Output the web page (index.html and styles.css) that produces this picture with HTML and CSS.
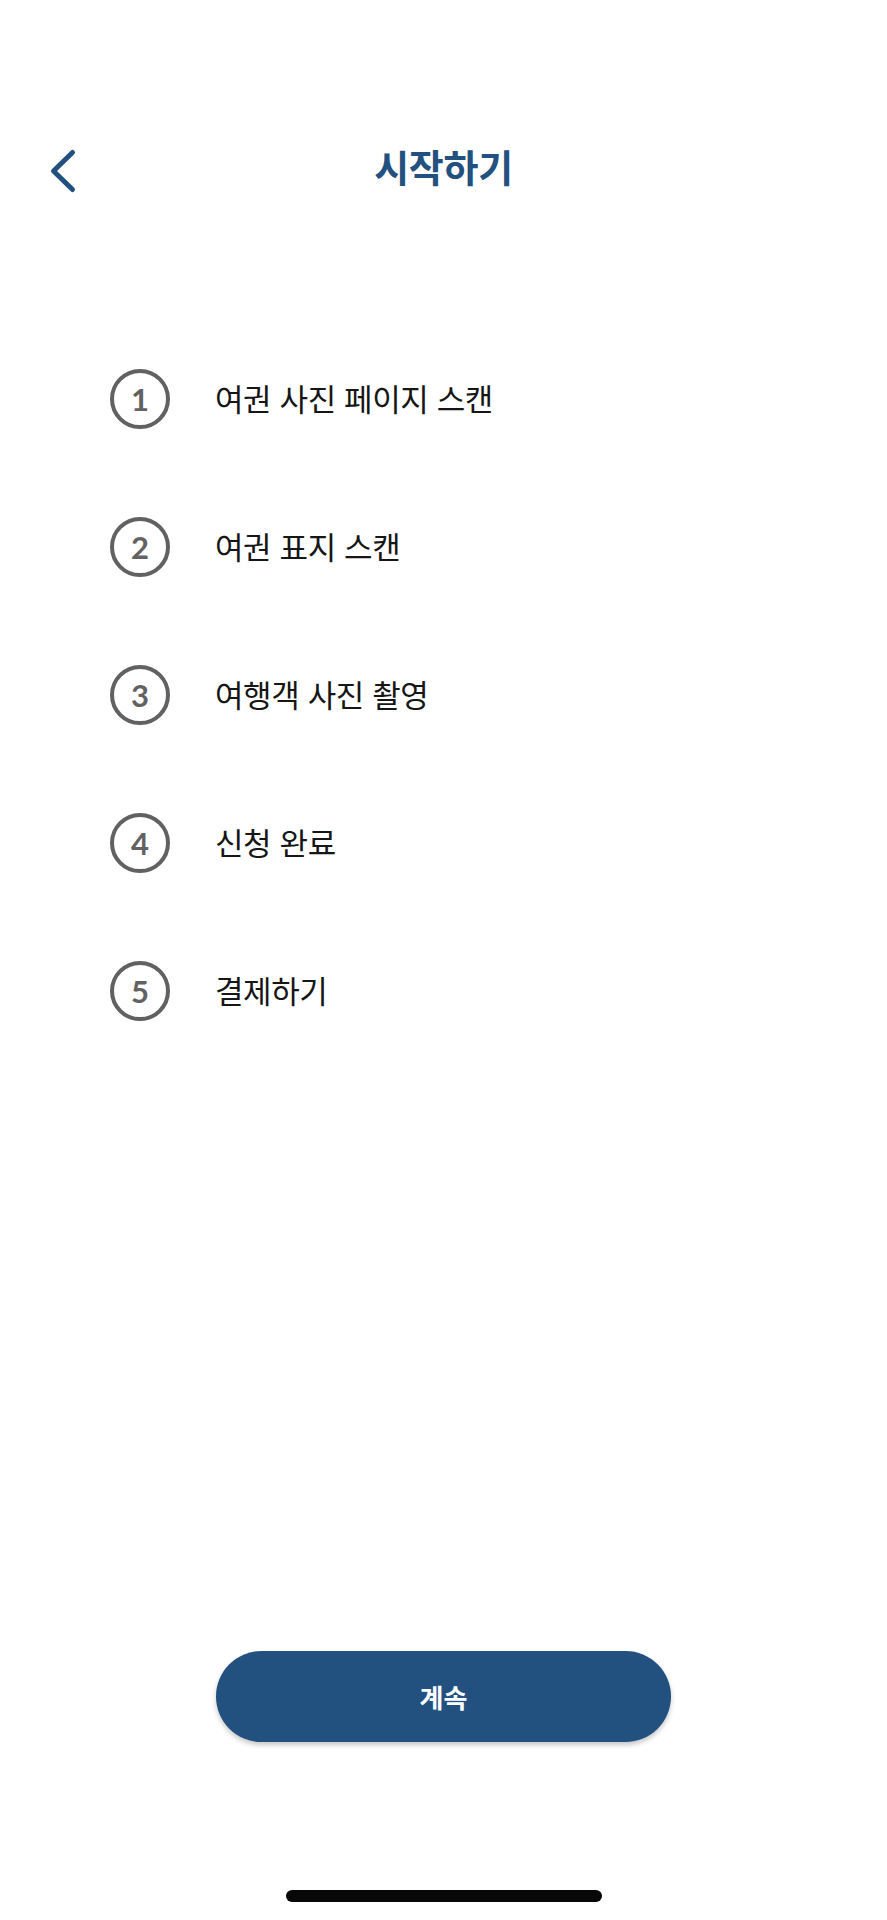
FILE: index.html
```html
<!DOCTYPE html>
<html lang="ko">
<head>
<meta charset="utf-8">
<title>시작하기</title>
<link rel="stylesheet" href="styles.css">
</head>
<body>
<div class="screen">
  <header class="header">
    <button class="back" aria-label="뒤로">
      <svg width="30" height="48" viewBox="0 0 30 48"><path d="M24.5 5.5 L5.5 24 L24.5 42.5" fill="none" stroke="#22507f" stroke-width="5" stroke-linecap="round" stroke-linejoin="round"/></svg>
    </button>
    <h1 class="title">시작하기</h1>
  </header>
  <ol class="steps">
    <li class="step"><span class="num">1</span><span class="label">여권 사진 페이지 스캔</span></li>
    <li class="step"><span class="num">2</span><span class="label">여권 표지 스캔</span></li>
    <li class="step"><span class="num">3</span><span class="label">여행객 사진 촬영</span></li>
    <li class="step"><span class="num">4</span><span class="label">신청 완료</span></li>
    <li class="step"><span class="num">5</span><span class="label">결제하기</span></li>
  </ol>
  <div class="spacer"></div>
  <button class="continue">계속</button>
  <div class="home-indicator"></div>
</div>
</body>
</html>
```
FILE: styles.css
```css
* { box-sizing: border-box; }
html, body { margin: 0; padding: 0; background: #fff; }
body { font-family: "Noto Sans CJK KR", "Noto Sans", sans-serif; }
.screen {
  width: 887px;
  height: 1920px;
  display: flex;
  flex-direction: column;
  align-items: stretch;
  padding-bottom: 18px;
}
.header {
  margin-top: 136px;
  height: 60px;
  display: grid;
  grid-template-columns: 1fr auto 1fr;
  align-items: center;
}
.back {
  grid-column: 1;
  grid-row: 1;
  justify-self: start;
  margin-left: 48px;
  margin-top: 10px;
  padding: 0;
  border: 0;
  background: none;
  width: 30px;
  height: 48px;
  display: block;
}
.back svg { display: block; }
.title {
  grid-column: 2;
  grid-row: 1;
  margin: 0;
  font-size: 38px;
  font-weight: 700;
  color: #22507f;
  line-height: 60px;
  letter-spacing: -0.3px;
}
.steps {
  list-style: none;
  margin: 129px 0 0 0;
  padding: 0 0 0 110px;
  display: flex;
  flex-direction: column;
}
.step {
  height: 148px;
  display: flex;
  align-items: center;
  gap: 45px;
}
.num {
  width: 60px;
  height: 60px;
  border: 4px solid #616161;
  border-radius: 50%;
  display: flex;
  align-items: center;
  justify-content: center;
  font-family: Lato, "Open Sans", sans-serif;
  font-weight: 700;
  font-size: 31px;
  color: #626262;
  flex: none;
}
.label {
  font-size: 31px;
  color: #161616;
  letter-spacing: -0.4px;
  margin-top: -3px;
}
.spacer { flex: 1; }
.continue {
  align-self: center;
  width: 455px;
  height: 91px;
  border: 0;
  border-radius: 46px;
  background: #22507f;
  color: #fff;
  font-family: "Noto Sans CJK KR", sans-serif;
  font-weight: 700;
  font-size: 26px;
  box-shadow: 0 3px 5px rgba(0,0,0,0.22);
  margin-bottom: 148px;
  padding: 0;
}
.home-indicator {
  align-self: center;
  width: 316px;
  height: 12px;
  border-radius: 6px;
  background: #080808;
}
```
